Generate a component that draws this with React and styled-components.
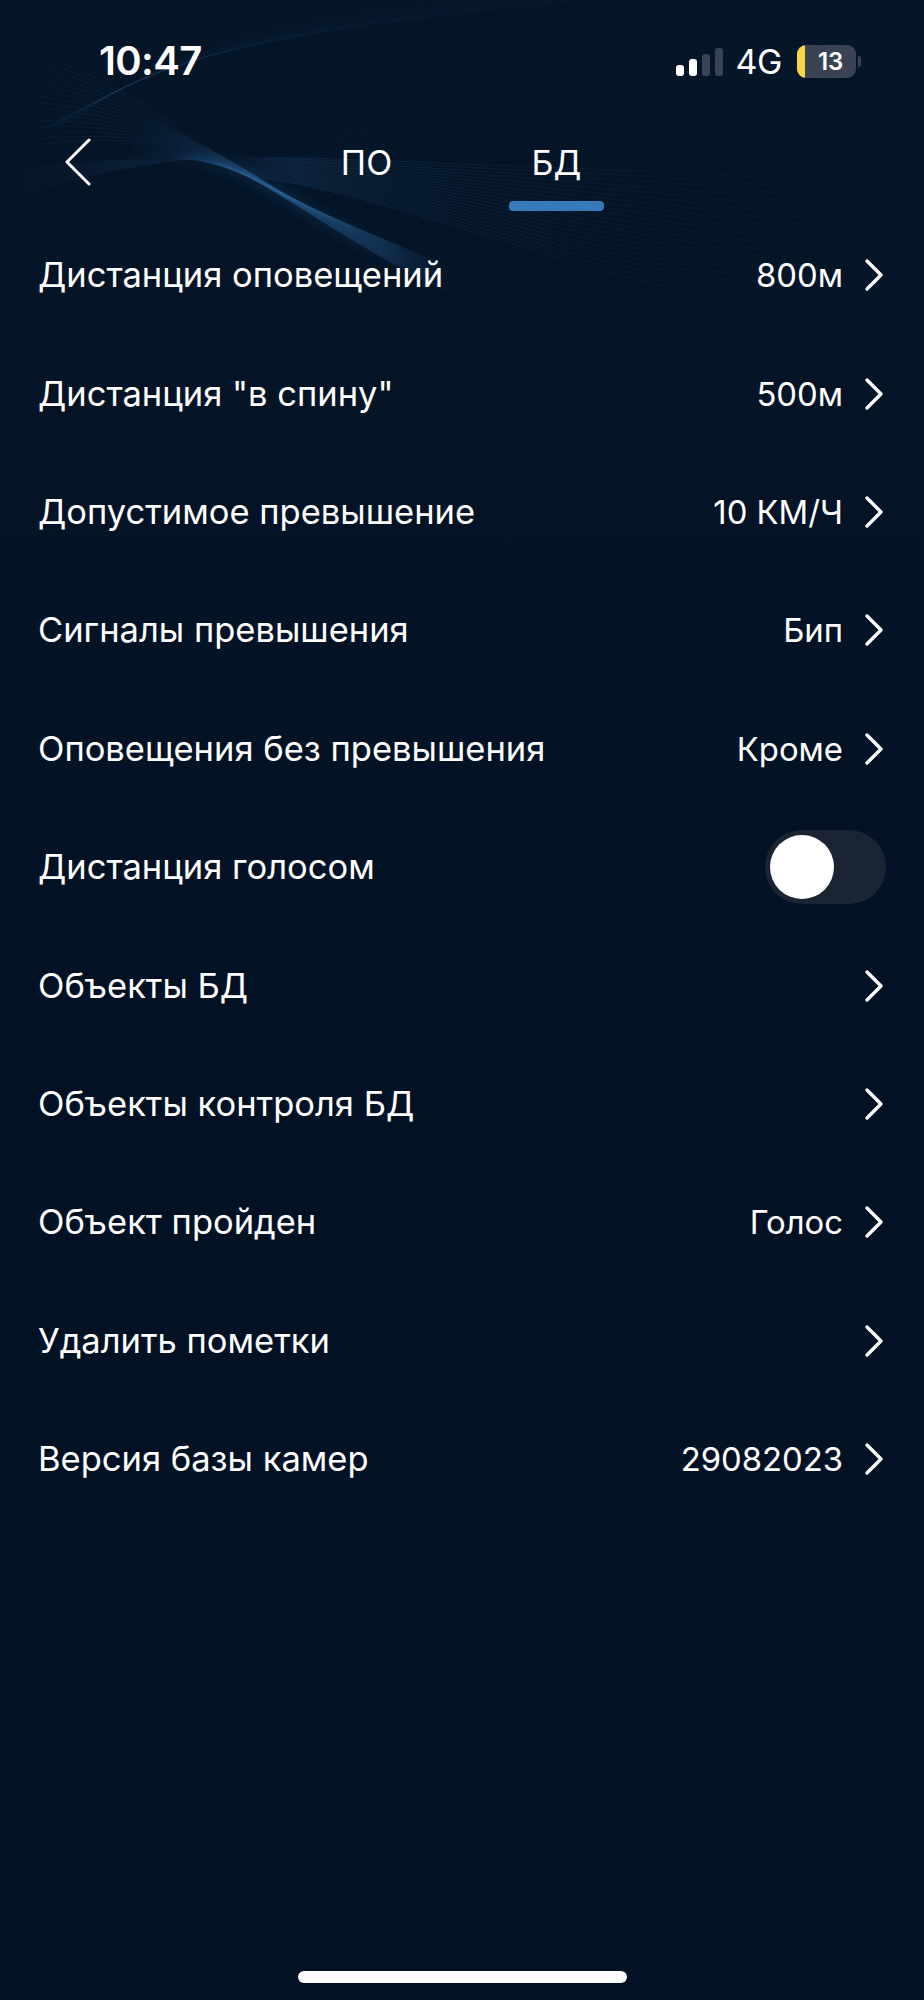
import React from 'react';
import styled, { createGlobalStyle } from 'styled-components';

const Global = createGlobalStyle`
  html, body { margin: 0; padding: 0; background: #021224; }
`;

const Page = styled.div`
  position: relative;
  width: 924px;
  height: 2000px;
  overflow: hidden;
  display: flex;
  flex-direction: column;
  background: linear-gradient(180deg, #051528 0px, #041426 500px, #021224 1000px, #021224 100%);
  color: #fff;
  font-family: Inter, "Liberation Sans", sans-serif;
`;

const WaveArt = styled.svg`
  position: absolute;
  left: 0;
  top: 0;
  width: 924px;
  height: 800px;
  pointer-events: none;
`;

const StatusBar = styled.div`
  position: relative;
  height: 122px;
  padding: 0 63px 0 99px;
  box-sizing: border-box;
  display: flex;
  align-items: flex-start;
  justify-content: space-between;
`;

const Time = styled.div`
  margin-top: 39px;
  font-size: 40px;
  line-height: 44px;
  font-weight: 600;
  letter-spacing: -0.6px;
`;

const StatusRight = styled.div`
  margin-top: 45px;
  display: flex;
  align-items: center;
  height: 33px;
`;

const NetLabel = styled.span`
  margin: 0 15px 0 12px;
  font-size: 34px;
  line-height: 33px;
  font-weight: 400;
  letter-spacing: -0.4px;
`;

const Battery = styled.div`
  position: relative;
  width: 59px;
  height: 33px;
  border-radius: 9px;
  overflow: hidden;
  background: #3a4353;
  display: flex;
  align-items: center;
  justify-content: center;
  padding-left: 8px;
  box-sizing: border-box;
  font-size: 24px;
  font-weight: 600;
  letter-spacing: -0.3px;
`;

const BatteryFill = styled.span`
  position: absolute;
  left: 0;
  top: 0;
  bottom: 0;
  width: 8px;
  background: #fbd540;
`;

const BatteryNub = styled.span`
  width: 3px;
  height: 11px;
  margin-left: 2px;
  border-radius: 0 3px 3px 0;
  background: #3a4353;
`;

const Nav = styled.div`
  position: relative;
  height: 94px;
  display: flex;
`;

const BackButton = styled.div`
  position: absolute;
  left: 64px;
  top: 16px;
`;

const Tabs = styled.div`
  margin-left: 319px;
  display: flex;
`;

const Tab = styled.div`
  width: 95px;
  margin-right: 95px;
  text-align: center;
  font-size: 34px;
  line-height: 42px;
  padding-top: 20px;
  height: 89px;
  box-sizing: border-box;
  position: relative;
  &::after {
    content: '';
    display: ${p => (p.$active ? 'block' : 'none')};
    position: absolute;
    left: 0;
    right: 0;
    bottom: 0;
    height: 10px;
    border-radius: 4px;
    background: #377ab9;
  }
`;

const List = styled.div`
  position: relative;
  display: flex;
  flex-direction: column;
`;

const Row = styled.div`
  height: 118.4px;
  padding: 0 40px 0 38px;
  box-sizing: border-box;
  display: flex;
  align-items: center;
  justify-content: space-between;
`;

const Label = styled.span`
  font-size: 34.5px;
  line-height: 42px;
`;

const Right = styled.div`
  display: flex;
  align-items: center;
  gap: 21px;
`;

const Value = styled.span`
  font-size: 32.8px;
  line-height: 42px;
`;

const Switch = styled.div`
  width: 121px;
  height: 74px;
  margin-right: -2px;
  border-radius: 37px;
  background: #1a2433;
  display: flex;
  align-items: center;
  padding-left: 5px;
  box-sizing: border-box;
`;

const Knob = styled.div`
  width: 64px;
  height: 64px;
  border-radius: 50%;
  background: #fff;
`;

const HomeBar = styled.div`
  width: 329px;
  height: 12px;
  border-radius: 6px;
  background: #fff;
  margin: auto auto 17px;
`;

const rows = [
  ['Дистанция оповещений', '800м'],
  ['Дистанция "в спину"', '500м'],
  ['Допустимое превышение', '10 КМ/Ч'],
  ['Сигналы превышения', 'Бип'],
  ['Оповещения без превышения', 'Кроме'],
  ['Дистанция голосом', null, true],
  ['Объекты БД', ''],
  ['Объекты контроля БД', ''],
  ['Объект пройден', 'Голос'],
  ['Удалить пометки', ''],
  ['Версия базы камер', '29082023'],
];

const Chevron = () => (
  <svg width="20" height="34" viewBox="0 0 20 34" fill="none" stroke="#fff" strokeWidth="3.4" strokeLinecap="round" strokeLinejoin="round">
    <path d="M3 3 L17 17 L3 31" />
  </svg>
);

const range = n => Array.from({ length: n }, (_, i) => i / (n - 1));
const mix = (a, b, t) => (a + (b - a) * t).toFixed(1);

const upper = [150, 117, 190, 140, 225, 156, 267, 183, 340, 220, 455, 270];
const lower = [125, 160, 170, 155, 205, 158, 240, 173, 320, 225, 445, 292];

const ribbonPath = t => {
  const p = upper.map((u, i) => mix(u, lower[i], t));
  return `M${p[0]} ${p[1]} C ${p[2]} ${p[3]}, ${p[4]} ${p[5]}, ${p[6]} ${p[7]} S ${p[8]} ${p[9]}, ${p[10]} ${p[11]}`;
};

const Wave = () => (
  <WaveArt viewBox="0 0 924 800">
    <defs>
      <filter id="soft" filterUnits="userSpaceOnUse" x="0" y="0" width="924" height="500"><feGaussianBlur stdDeviation="5" /></filter>
      <linearGradient id="glowLine" gradientUnits="userSpaceOnUse" x1="170" y1="0" x2="440" y2="0">
        <stop offset="0" stopColor="#2a6299" stopOpacity="0" />
        <stop offset="0.3" stopColor="#2a6299" stopOpacity="0.16" />
        <stop offset="0.7" stopColor="#2a6299" stopOpacity="0.14" />
        <stop offset="1" stopColor="#2a6299" stopOpacity="0" />
      </linearGradient>
      <linearGradient id="fadeR" gradientUnits="userSpaceOnUse" x1="120" y1="0" x2="455" y2="0">
        <stop offset="0" stopColor="#2f6fae" stopOpacity="0" />
        <stop offset="0.3" stopColor="#2f6fae" stopOpacity="0.2" />
        <stop offset="0.78" stopColor="#2f6fae" stopOpacity="0.2" />
        <stop offset="1" stopColor="#2f6fae" stopOpacity="0" />
      </linearGradient>
      <linearGradient id="fanR" gradientUnits="userSpaceOnUse" x1="225" y1="0" x2="924" y2="0">
        <stop offset="0" stopColor="#3a78b5" stopOpacity="0" />
        <stop offset="0.1" stopColor="#3a78b5" stopOpacity="0.18" />
        <stop offset="0.45" stopColor="#3a78b5" stopOpacity="0.07" />
        <stop offset="1" stopColor="#3a78b5" stopOpacity="0.03" />
      </linearGradient>
      <linearGradient id="fanL" gradientUnits="userSpaceOnUse" x1="0" y1="0" x2="205" y2="0">
        <stop offset="0" stopColor="#3a78b5" stopOpacity="0.03" />
        <stop offset="0.6" stopColor="#3a78b5" stopOpacity="0.09" />
        <stop offset="1" stopColor="#3a78b5" stopOpacity="0" />
      </linearGradient>
    </defs>
    {range(16).map(t => (
      <path key={'a' + t} fill="none" stroke="url(#fanL)" strokeWidth="1"
        d={`M${-5} ${40 + 110 * t} C 60 ${60 + 80 * t}, 130 ${85 + 50 * t}, 210 ${150}`} />
    ))}
    {range(10).map(t => (
      <path key={'b' + t} fill="none" stroke="url(#fanL)" strokeWidth="1"
        d={`M${-5} ${205 - 30 * t} C 40 ${190 - 25 * t}, 90 ${168 - 8 * t}, 205 ${158}`} />
    ))}
    {range(14).map(t => (
      <path key={'c' + t} fill="none" stroke="#3a78b5" strokeOpacity="0.05" strokeWidth="1"
        d={`M${40 + 40 * t} ${130 - 10 * t} C 140 ${80 - 30 * t}, ${230 + 120 * t} ${30 - 10 * t}, ${330 + 330 * t} ${-6}`} />
    ))}
    {range(12).map(t => (
      <path key={'d' + t} fill="none" stroke="#3a78b5" strokeOpacity="0.045" strokeWidth="1"
        d={`M${300 + 40 * t} ${160 - 30 * t} C ${480 + 40 * t} ${150 - 50 * t}, ${700} ${100 - 40 * t}, 930 ${70 - 72 * t}`} />
    ))}
    {range(22).map(t => (
      <path key={'e' + t} fill="none" stroke="url(#fanR)" strokeWidth="1"
        d={`M225 ${157 + 18 * t} C ${330} ${157 + 22 * t}, ${470} ${165 + 70 * t}, ${620} ${170 + 105 * t} S ${840} ${185 + 150 * t}, 930 ${205 + 190 * t}`} />
    ))}
    <path d="M170 158 C 215 156, 250 174, 295 202 S 370 244, 440 280" fill="none"
      stroke="url(#glowLine)" strokeWidth="14" filter="url(#soft)" />
    {range(26).map(t => (
      <path key={'f' + t} fill="none" stroke="url(#fadeR)" strokeWidth="1" d={ribbonPath(t)} />
    ))}
  </WaveArt>
);

export default function App() {
  return (
    <Page>
      <Global />
      <Wave />
      <StatusBar>
        <Time>10:47</Time>
        <StatusRight>
          <svg width="47" height="28" viewBox="0 0 47 28">
            <rect x="0" y="17" width="8" height="11" rx="3" fill="#fff" />
            <rect x="13" y="11" width="8" height="17" rx="3" fill="#fff" />
            <rect x="26" y="6" width="8" height="22" rx="3" fill="#3a4353" />
            <rect x="39" y="0" width="8" height="28" rx="3" fill="#3a4353" />
          </svg>
          <NetLabel>4G</NetLabel>
          <Battery><BatteryFill />13</Battery>
          <BatteryNub />
        </StatusRight>
      </StatusBar>
      <Nav>
        <BackButton>
          <svg width="28" height="48" viewBox="0 0 28 48" fill="none" stroke="#fff" strokeWidth="3" strokeLinecap="round" strokeLinejoin="round">
            <path d="M25 2 L3 24 L25 46" />
          </svg>
        </BackButton>
        <Tabs>
          <Tab>ПО</Tab>
          <Tab $active>БД</Tab>
        </Tabs>
      </Nav>
      <List>
        {rows.map(([label, value, toggle]) => (
          <Row key={label}>
            <Label>{label}</Label>
            {toggle ? (
              <Switch><Knob /></Switch>
            ) : (
              <Right>
                {value ? <Value>{value}</Value> : null}
                <Chevron />
              </Right>
            )}
          </Row>
        ))}
      </List>
      <HomeBar />
    </Page>
  );
}
